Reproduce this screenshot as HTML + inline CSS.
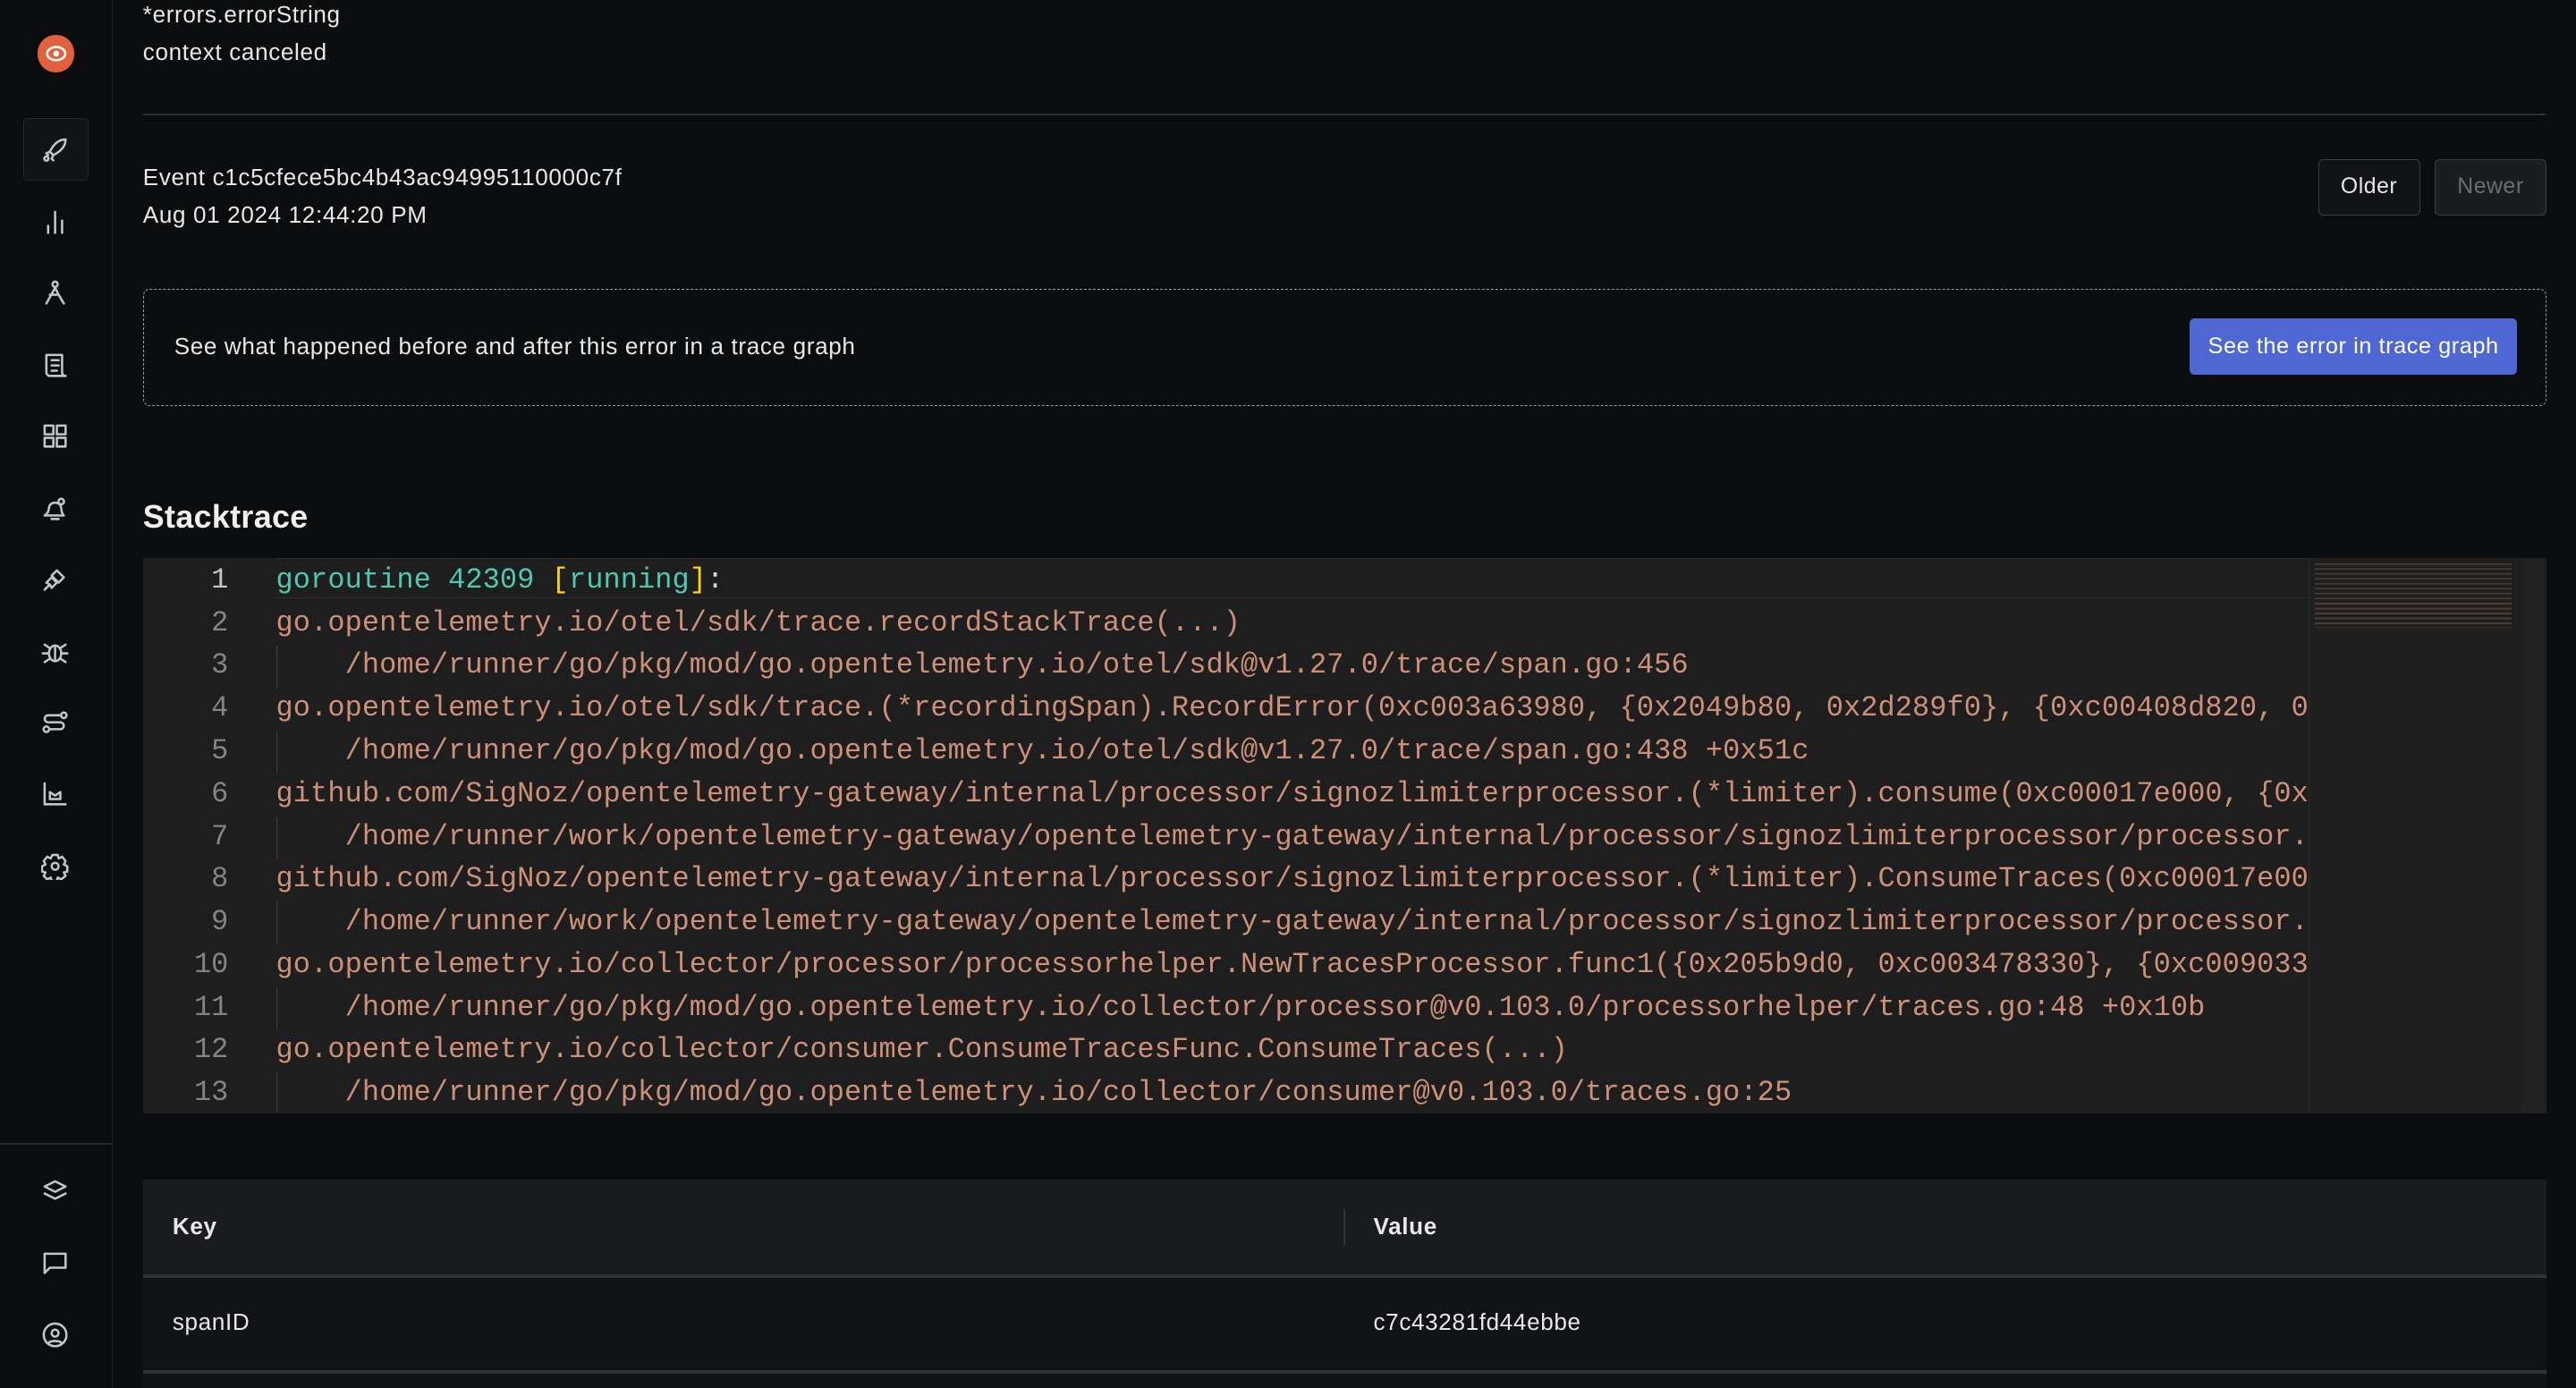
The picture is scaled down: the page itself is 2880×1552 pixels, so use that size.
<!DOCTYPE html>
<html><head><meta charset="utf-8"><style>
html{zoom:1.836735}
body{margin:0;width:1568px;height:845px;background:#0b0c0e;overflow:hidden;position:relative;font-family:"Liberation Sans",sans-serif;color:#e8e8e8}
.abs{position:absolute}
.side{left:0;top:0;width:68px;height:845px;border-right:1px solid #1d1f23;background:#0b0c0e}
.ic{position:absolute;left:25px;width:17px;height:17px}
.ic svg{width:17px;height:17px;fill:none;stroke:#c4c5c8;stroke-width:1.3;stroke-linecap:round;stroke-linejoin:round}
.t{font-size:14.2px;white-space:nowrap;line-height:16px;letter-spacing:0.35px}
.btn{border:1px solid #3a3d43;border-radius:3px;font-size:13.5px;display:flex;align-items:center;justify-content:center;box-sizing:border-box;letter-spacing:0.3px}
.code{left:87px;top:340px;width:1463px;height:338px;background:#1e1e1e;overflow:hidden}
.ln{position:absolute;left:0;width:52px;text-align:right;color:#858585;font-family:"Liberation Mono",monospace;font-size:17.4px}
.cl{position:absolute;left:81px;white-space:pre;color:#ce9178;font-family:"Liberation Mono",monospace;font-size:17.4px;letter-spacing:0.05px}
.guide{position:absolute;left:81px;width:1px;height:26px;background:#404040}
</style></head><body>
<div class="abs side">
  <div class="abs" style="left:23px;top:21px;width:22px;height:23px;border-radius:11px;background:#e0613c"></div>
  <svg class="abs" style="left:27px;top:26px" width="14" height="13" viewBox="0 0 14 13"><ellipse cx="7" cy="6.5" rx="5.5" ry="4" fill="none" stroke="#fff" stroke-width="1.4"/><circle cx="7" cy="6.5" r="1.8" fill="#fff"/></svg>
  <div class="abs" style="left:14px;top:72px;width:40px;height:38px;border:1px solid #23262b;border-radius:3px;background:#121317;box-sizing:border-box"></div>
  <div class="ic" style="top:83px"><svg viewBox="0 0 16 16"><path d="M14 2c-4 0-7 3-9 7l2 2c4-2 7-5 7-9z M5 9l-2 1 1 1 M7 11l-1 2 1 1"/><circle cx="3" cy="13" r="1.2"/></svg></div>
  <div class="ic" style="top:127px"><svg viewBox="0 0 16 16"><path d="M4 14v-4M8 14V2M12 14V7"/></svg></div>
  <div class="ic" style="top:170px"><svg viewBox="0 0 16 16"><circle cx="8" cy="3" r="1.5"/><path d="M8 5L3 14M8 5l2 4 M5 9h5l3 5"/></svg></div>
  <div class="ic" style="top:214px"><svg viewBox="0 0 16 16"><path d="M3 2h9v10a2 2 0 0 0 2 2H5a2 2 0 0 1-2-2V2zM6 5h4M6 8h4M6 11h3"/></svg></div>
  <div class="ic" style="top:257px"><svg viewBox="0 0 16 16"><rect x="2" y="2" width="5" height="5"/><rect x="9" y="2" width="5" height="5"/><rect x="2" y="9" width="5" height="5"/><rect x="9" y="9" width="5" height="5"/></svg></div>
  <div class="ic" style="top:301px"><svg viewBox="0 0 16 16"><path d="M3 12h10c-2-2-1-4-2-6a4 4 0 0 0-6 0c-1 2 0 4-3 6zM6 14h4"/><circle cx="11.5" cy="4" r="1.6"/></svg></div>
  <div class="ic" style="top:344px"><svg viewBox="0 0 16 16"><path d="M2 14l3-3M9 3l4 4-3 3-4-4z M5 11l-2-1 3-3 3 3-3 3z"/></svg></div>
  <div class="ic" style="top:388px"><svg viewBox="0 0 16 16"><ellipse cx="8" cy="9" rx="3.5" ry="4.5"/><path d="M8 5v8M1 9h3.5M11.5 9H15M2 4l3 2M14 4l-3 2M2 14l3-2M14 14l-3-2"/></svg></div>
  <div class="ic" style="top:431px"><svg viewBox="0 0 16 16"><path d="M4 4h7M5 8h6a2 2 0 0 1 0 4H5M4 8a2 2 0 0 1 0-4"/><circle cx="13" cy="4" r="1.6"/><circle cx="3" cy="12" r="1.6"/></svg></div>
  <div class="ic" style="top:475px"><svg viewBox="0 0 16 16"><path d="M2 2v12h12M5 11V7l3 2 3-2v4z"/></svg></div>
  <div class="ic" style="top:519px"><svg viewBox="0 0 16 16"><circle cx="8" cy="8" r="2"/><path d="M6.5 1.5h3l.5 2 2-1 2 2.5-1 2 2 1v3l-2 .5 1 2-2.5 2-2-1-.5 2h-3l-.5-2-2 1-2-2 1-2-2-.5v-3l2-1-1-2 2-2.5 2 1z"/></svg></div>
  <div class="abs" style="left:0;top:696px;width:68px;height:1px;background:#23262b"></div>
  <div class="ic" style="top:717px"><svg viewBox="0 0 16 16"><path d="M8 2l6 3-6 3-6-3zM2 9l6 3 6-3"/></svg></div>
  <div class="ic" style="top:760px"><svg viewBox="0 0 16 16"><path d="M2 3h12v8H5l-3 3z"/></svg></div>
  <div class="ic" style="top:804px"><svg viewBox="0 0 16 16"><circle cx="8" cy="8" r="6.5"/><circle cx="8" cy="7" r="2"/><path d="M4 13c1-2 7-2 8 0"/></svg></div>
</div>

<div class="abs t" style="left:87px;top:1px">*errors.errorString</div>
<div class="abs t" style="left:87px;top:24px">context canceled</div>
<div class="abs" style="left:87px;top:69px;width:1463px;height:1px;background:#2e3035"></div>
<div class="abs t" style="left:87px;top:100px">Event c1c5cfece5bc4b43ac94995110000c7f</div>
<div class="abs t" style="left:87px;top:123px">Aug 01 2024 12:44:20 PM</div>
<div class="abs btn" style="left:1411px;top:97px;width:62px;height:34px;background:#121317;color:#e8e8e8">Older</div>
<div class="abs btn" style="left:1482px;top:97px;width:68px;height:34px;background:#1a1c20;color:#6b6d72">Newer</div>

<div class="abs" style="left:87px;top:176px;width:1463px;height:71px;border:1px dashed #9a9ca0;border-radius:4px;box-sizing:border-box"></div>
<div class="abs t" style="left:106px;top:203px">See what happened before and after this error in a trace graph</div>
<div class="abs btn" style="left:1333px;top:194px;width:199px;height:34px;background:#4e67d3;border-color:#4e67d3;color:#fff;font-size:13.8px">See the error in trace graph</div>

<div class="abs" style="left:87px;top:304px;font-size:19.5px;font-weight:bold;color:#f0f0f0;letter-spacing:0.2px">Stacktrace</div>

<div class="abs code">
  <div class="abs" style="left:80px;top:0;width:1318px;height:24px;border:1px solid #2c2c2c;border-left:none;box-sizing:border-box"></div>
  <div class="abs" style="left:1318px;top:0;width:130px;height:338px;background:#1f1f1f;border-left:1px solid #2a2a2a"></div>
  <div class="abs" style="left:1448px;top:0;width:15px;height:338px;background:#222"></div>
  <div class="abs" style="left:1322px;top:2px;width:120px;height:40px;background:repeating-linear-gradient(#1f1f1f 0 1px,#6a4f40 1px 2px,#1f1f1f 2px 3px);opacity:.6"></div>
</div>

<div class="abs" style="left:87px;top:718px;width:1463px;height:58px;background:#1b1c20"></div>
<div class="abs" style="left:818px;top:736px;width:1px;height:22px;background:#34363b"></div>
<div class="abs t" style="left:105px;top:739px;font-weight:bold">Key</div>
<div class="abs t" style="left:836px;top:739px;font-weight:bold">Value</div>
<div class="abs" style="left:87px;top:776px;width:1463px;height:2px;background:#303237"></div>
<div class="abs" style="left:87px;top:778px;width:1463px;height:57px;background:#121317"></div>
<div class="abs t" style="left:105px;top:797px">spanID</div>
<div class="abs t" style="left:836px;top:797px">c7c43281fd44ebbe</div>
<div class="abs" style="left:87px;top:834px;width:1463px;height:2px;background:#303237"></div>
<div class="abs" style="left:87px;top:836px;width:1463px;height:9px;background:#121317"></div>

<div class="abs" style="left:87px;top:341px;width:1318px;height:337px;overflow:hidden">
<div class="ln" style="top:2px;color:#c6c6c6">1</div><div class="cl" style="top:2px"><span style="color:#4ec9b0">goroutine 42309 </span><span style="color:#ffd700">[</span><span style="color:#4ec9b0">running</span><span style="color:#ffd700">]</span><span style="color:#d4d4d4">:</span></div>
<div class="ln" style="top:28px">2</div><div class="cl" style="top:28px">go.opentelemetry.io/otel/sdk/trace.recordStackTrace(...)</div>
<div class="guide" style="top:52px"></div><div class="ln" style="top:54px">3</div><div class="cl" style="top:54px">    /home/runner/go/pkg/mod/go.opentelemetry.io/otel/sdk@v1.27.0/trace/span.go:456</div>
<div class="ln" style="top:80px">4</div><div class="cl" style="top:80px">go.opentelemetry.io/otel/sdk/trace.(*recordingSpan).RecordError(0xc003a63980, {0x2049b80, 0x2d289f0}, {0xc00408d820, 0</div>
<div class="guide" style="top:104px"></div><div class="ln" style="top:106px">5</div><div class="cl" style="top:106px">    /home/runner/go/pkg/mod/go.opentelemetry.io/otel/sdk@v1.27.0/trace/span.go:438 +0x51c</div>
<div class="ln" style="top:132px">6</div><div class="cl" style="top:132px">github.com/SigNoz/opentelemetry-gateway/internal/processor/signozlimiterprocessor.(*limiter).consume(0xc00017e000, {0x</div>
<div class="guide" style="top:156px"></div><div class="ln" style="top:158px">7</div><div class="cl" style="top:158px">    /home/runner/work/opentelemetry-gateway/opentelemetry-gateway/internal/processor/signozlimiterprocessor/processor.</div>
<div class="ln" style="top:184px">8</div><div class="cl" style="top:184px">github.com/SigNoz/opentelemetry-gateway/internal/processor/signozlimiterprocessor.(*limiter).ConsumeTraces(0xc00017e00</div>
<div class="guide" style="top:208px"></div><div class="ln" style="top:210px">9</div><div class="cl" style="top:210px">    /home/runner/work/opentelemetry-gateway/opentelemetry-gateway/internal/processor/signozlimiterprocessor/processor.</div>
<div class="ln" style="top:236px">10</div><div class="cl" style="top:236px">go.opentelemetry.io/collector/processor/processorhelper.NewTracesProcessor.func1({0x205b9d0, 0xc003478330}, {0xc009033</div>
<div class="guide" style="top:260px"></div><div class="ln" style="top:262px">11</div><div class="cl" style="top:262px">    /home/runner/go/pkg/mod/go.opentelemetry.io/collector/processor@v0.103.0/processorhelper/traces.go:48 +0x10b</div>
<div class="ln" style="top:288px">12</div><div class="cl" style="top:288px">go.opentelemetry.io/collector/consumer.ConsumeTracesFunc.ConsumeTraces(...)</div>
<div class="guide" style="top:312px"></div><div class="ln" style="top:314px">13</div><div class="cl" style="top:314px">    /home/runner/go/pkg/mod/go.opentelemetry.io/collector/consumer@v0.103.0/traces.go:25</div>
</div>
</body></html>
